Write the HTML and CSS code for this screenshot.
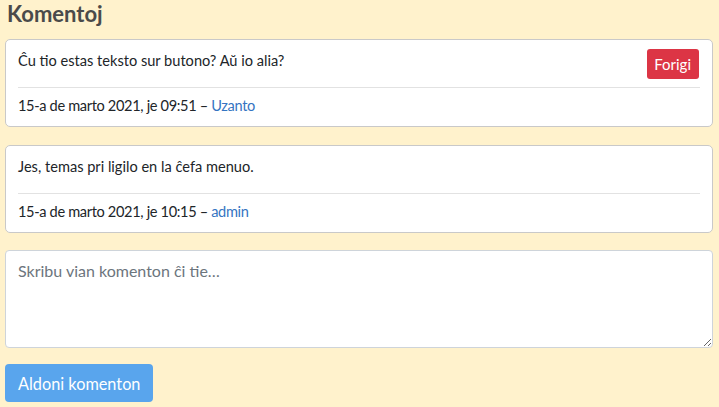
FILE: index.html
```html
<!DOCTYPE html>
<html lang="eo">
<head>
<meta charset="utf-8">
<title>Komentoj</title>
<link rel="stylesheet" href="styles.css">
</head>
<body>
<div class="page">
  <h2 class="title">Komentoj</h2>
  <div class="card">
    <div class="card-top">
      <div class="card-text">Ĉu tio estas teksto sur butono? Aŭ io alia?</div>
      <button class="btn-danger" type="button">Forigi</button>
    </div>
    <div class="card-meta">15-a de marto 2021, je 09:51 – <a href="#" class="link">Uzanto</a></div>
  </div>
  <div class="card">
    <div class="card-top">
      <div class="card-text">Jes, temas pri ligilo en la ĉefa menuo.</div>
    </div>
    <div class="card-meta">15-a de marto 2021, je 10:15 – <a href="#" class="link">admin</a></div>
  </div>
  <textarea class="comment-input" placeholder="Skribu vian komenton ĉi tie…"></textarea>
  <div class="actions">
    <button class="btn-primary" type="button">Aldoni komenton</button>
  </div>
</div>
</body>
</html>
```
FILE: styles.css
```css
html, body {
  margin: 0;
  padding: 0;
  background: #fff2cc;
}
body {
  font-family: Lato, "Open Sans", sans-serif;
  font-size: 14.6px;
  color: #212529;
}
.page {
  padding: 0 6px 0 5px;
  display: flex;
  flex-direction: column;
}
.title {
  margin: 0;
  padding: 1px 0 0 2px;
  font-size: 22px;
  line-height: 26px;
  font-weight: 700;
  color: #4a4a4a;
  box-sizing: border-box;
  height: 39px;
}
.card {
  background: #fff;
  border: 1px solid #c9c9c9;
  border-radius: 5px;
  padding: 9px 12px 8px;
  margin-bottom: 17px;
}
.card + .card {
  margin-top: 1px;
}
.card-top {
  display: flex;
  justify-content: space-between;
  align-items: flex-start;
  min-height: 30px;
  padding-bottom: 8px;
  border-bottom: 1px solid #e2e2e2;
}
.card-text {
  line-height: 24px;
}
.btn-danger {
  font: inherit;
  font-size: 15px;
  height: 30px;
  padding: 0 8px 0 7px;
  border: 0;
  border-radius: 3px;
  background: #dc3545;
  color: #fff;
  margin-right: 1px;
}
.card-meta {
  margin-top: 6px;
  line-height: 24px;
  letter-spacing: -0.35px;
}
.link {
  color: #3575c2;
  text-decoration: none;
}
.comment-input {
  display: block;
  box-sizing: border-box;
  width: 100%;
  height: 98px;
  margin: 0 0 16px;
  padding: 8px 12px;
  border: 1px solid #ced4da;
  border-radius: 4px;
  background: #fff;
  font: inherit;
  font-size: 16px;
  line-height: 24px;
  color: #495057;
  resize: vertical;
}
.comment-input::placeholder {
  color: #6c757d;
}
.actions {
  display: flex;
}
.btn-primary {
  font: inherit;
  font-size: 16.3px;
  height: 38px;
  padding: 0 13px;
  border: 0;
  border-radius: 4px;
  background: #59a5ed;
  color: #fff;
}
```
